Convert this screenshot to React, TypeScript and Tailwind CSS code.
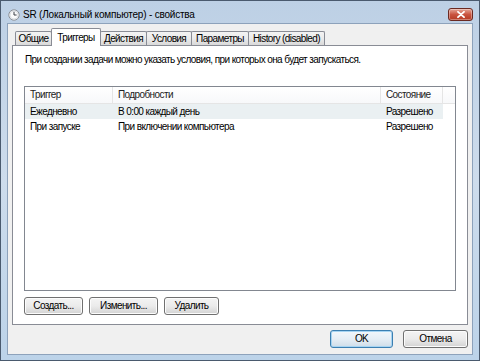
import React from 'react'

const font = { fontFamily: '"Liberation Sans", Arial, sans-serif' }

function ClockIcon() {
  return (
    <svg width="12" height="12" viewBox="0 0 12 12">
      <circle cx="6" cy="6" r="5.2" fill="#fbfbfb" stroke="#8a8f96" strokeWidth="1" />
      <circle cx="6" cy="6" r="4" fill="none" stroke="#d5d9de" strokeWidth="0.8" />
      <path d="M6 2.8 V6 H8.6" fill="none" stroke="#3a3f46" strokeWidth="1" />
    </svg>
  )
}

function CloseButton() {
  return (
    <div className="w-[25px] h-[13px] rounded-[3px] border border-[#6b2a22] bg-gradient-to-b from-[#e4a597] via-[#c9533f] to-[#b53a22] flex items-center justify-center shadow-[inset_0_0_0_1px_rgba(255,255,255,0.35)]">
      <svg width="8" height="7" viewBox="0 0 8 7">
        <path d="M1 0.8 L7 6.2 M7 0.8 L1 6.2" stroke="#ffffff" strokeWidth="1.8" strokeLinecap="round" />
      </svg>
    </div>
  )
}

function Tab({ label, w, active }: { label: string; w: string; active?: boolean }) {
  if (active) {
    return (
      <div className={'relative z-10 -mb-px -ml-px h-[18px] flex items-center justify-center border border-b-0 border-[#898c95] rounded-t-[2px] bg-white text-black ' + w}>
        {label}
      </div>
    )
  }
  return (
    <div className={'h-[14px] flex items-center justify-center border border-b-0 border-[#898c95] -ml-px first:ml-0 rounded-t-[2px] bg-gradient-to-b from-[#f3f3f3] via-[#ebebeb] to-[#d9d9d9] text-black ' + w}>
      {label}
    </div>
  )
}

function Button({ label, w, primary }: { label: string; w: string; primary?: boolean }) {
  return (
    <div
      className={
        'h-[18px] rounded-[3px] border flex items-center justify-center text-black bg-gradient-to-b ' +
        w +
        (primary
          ? ' border-[#3c7fb1] from-[#f2f7fb] via-[#e6eef5] to-[#cfdde9] shadow-[inset_0_0_0_1px_#a6d4f2]'
          : ' border-[#707070] from-[#f4f4f4] via-[#ebebeb] to-[#d3d3d3] shadow-[inset_0_0_0_1px_#fcfcfc]')
      }
    >
      {label}
    </div>
  )
}

const rows = [
  { trigger: 'Ежедневно', details: 'В 0:00 каждый день', state: 'Разрешено', selected: true },
  { trigger: 'При запуске', details: 'При включении компьютера', state: 'Разрешено', selected: false },
]

export default function App() {
  return (
    <div
      className="w-[480px] h-[361px] flex flex-col border border-[#4a5a6e] bg-gradient-to-b from-[#bdd0e5] via-[#cddcec] to-[#bcd3e9] text-[10px] tracking-[-0.6px] leading-none overflow-hidden whitespace-nowrap"
      style={font}
    >
      {/* title bar */}
      <div className="h-[22px] shrink-0 flex items-center pt-[5px] pl-[7px] pr-[6px]">
        <ClockIcon />
        <span className="ml-[3px] text-black tracking-[-0.2px]">SR (Локальный компьютер) - свойства</span>
        <div className="ml-auto">
          <CloseButton />
        </div>
      </div>

      {/* client area */}
      <div className="flex-1 mx-[6px] mb-[5px] bg-[#f0f0f0] border border-[#8da2bb] flex flex-col px-[4px] pt-[4px]">
        {/* tabs */}
        <div className="flex items-end pl-[3px] h-[17px]">
          <Tab label="Общие" w="w-[37px]" />
          <Tab label="Триггеры" w="w-[50px]" active />
          <Tab label="Действия" w="w-[47px]" />
          <Tab label="Условия" w="w-[46px]" />
          <Tab label="Параметры" w="w-[58px]" />
          <Tab label="History (disabled)" w="w-[77px]" />
        </div>

        {/* tab panel */}
        <div className="h-[280px] border border-[#898c95] bg-white flex flex-col px-[11px] pt-[9px] pb-[9px]">
          <p className="text-black pl-[1px]">При создании задачи можно указать условия, при которых она будет запускаться.</p>

          <div className="mt-[21px] flex-1 border border-[#828790] bg-white flex flex-col">
            <div className="flex h-[17px] border-b border-[#e5e5e5] bg-gradient-to-b from-white to-[#f7f8fa] text-[#222]">
              <div className="w-[88px] pl-[5px] flex items-center border-r border-[#e5e5e5]">Триггер</div>
              <div className="w-[268px] pl-[5px] flex items-center border-r border-[#e5e5e5]">Подробности</div>
              <div className="w-[62px] pl-[5px] flex items-center border-r border-[#e5e5e5]">Состояние</div>
              <div className="flex-1" />
            </div>
            {rows.map((r) => (
              <div key={r.trigger} className="flex h-[15px] text-black">
                <div className={'flex w-[418px] ' + (r.selected ? 'bg-[#eaf0f2]' : '')}>
                  <div className="w-[88px] pl-[5px] flex items-center">{r.trigger}</div>
                  <div className="w-[268px] pl-[5px] flex items-center">{r.details}</div>
                  <div className="w-[62px] pl-[5px] flex items-center">{r.state}</div>
                </div>
              </div>
            ))}
          </div>

          <div className="mt-[6px] flex gap-[6px]">
            <Button label="Создать..." w="w-[59px]" />
            <Button label="Изменить..." w="w-[69px]" />
            <Button label="Удалить" w="w-[55px]" />
          </div>
        </div>

        {/* bottom buttons */}
        <div className="mt-[5px] flex justify-end gap-[10px]">
          <Button label="OK" w="w-[63px]" primary />
          <Button label="Отмена" w="w-[65px]" />
        </div>
      </div>
    </div>
  )
}
